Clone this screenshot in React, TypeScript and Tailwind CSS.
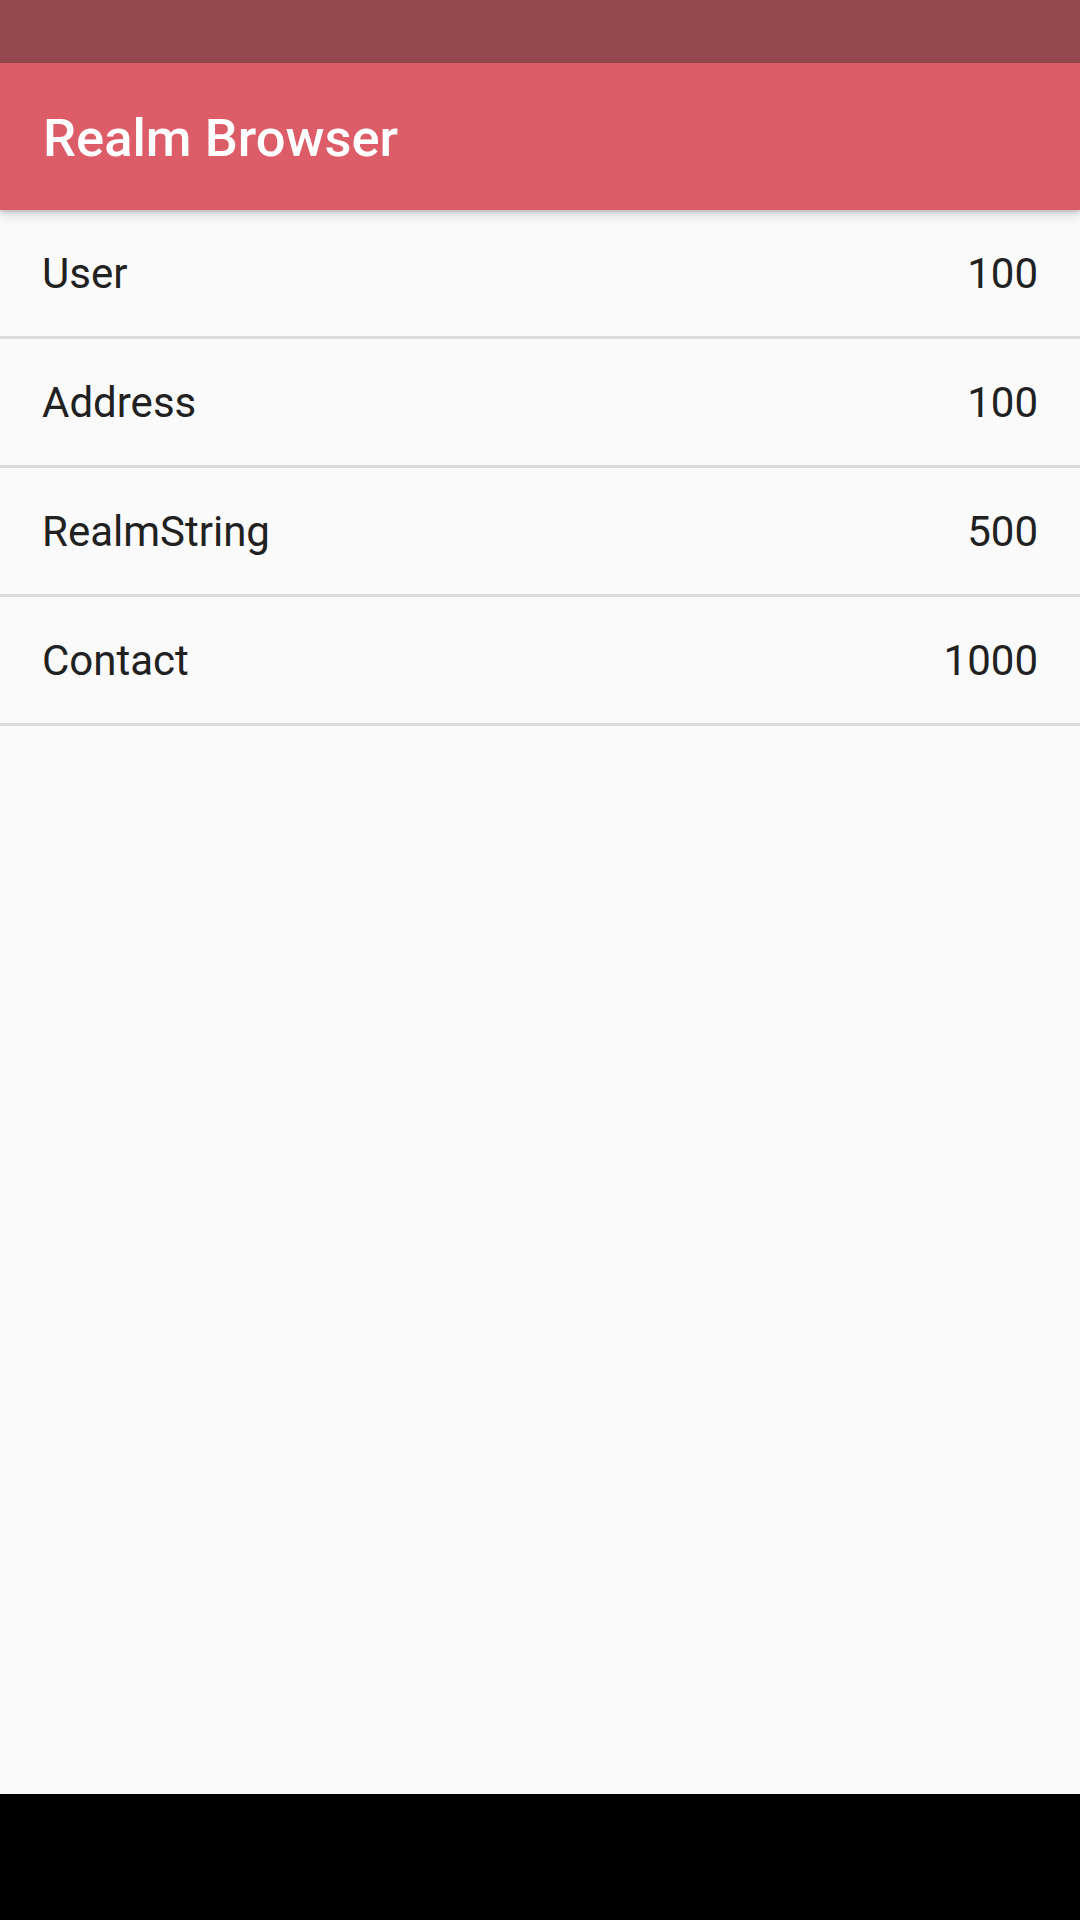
import React from "react";

const rows = [
  { name: "User", count: "100" },
  { name: "Address", count: "100" },
  { name: "RealmString", count: "500" },
  { name: "Contact", count: "1000" },
];

export default function App() {
  return (
    <div
      className="flex flex-col w-[1080px] h-[1920px] bg-[#fafafa] overflow-hidden"
      style={{ fontFamily: "Roboto, 'Noto Sans', sans-serif" }}
    >
      <div className="h-[63px] bg-[#93494e] shrink-0" />
      <div className="relative z-10 h-[147px] shrink-0 bg-[#dc5c68] flex items-center px-[43px] pt-[4px] shadow-[0_2px_4px_rgba(0,0,0,0.18),0_5px_12px_rgba(0,0,0,0.12)]">
        <span className="text-white text-[52.5px] font-medium leading-none">Realm Browser</span>
      </div>
      <div className="flex-1 bg-[#fafafa] flex flex-col">
        {rows.map((r) => (
          <div
            key={r.name}
            className="h-[129px] flex items-center justify-between px-[42px] border-b-[3px] border-[#dcdcdc] text-[42px] text-[#212121]"
          >
            <span>{r.name}</span>
            <span>{r.count}</span>
          </div>
        ))}
      </div>
      <div className="h-[126px] bg-black shrink-0" />
    </div>
  );
}
